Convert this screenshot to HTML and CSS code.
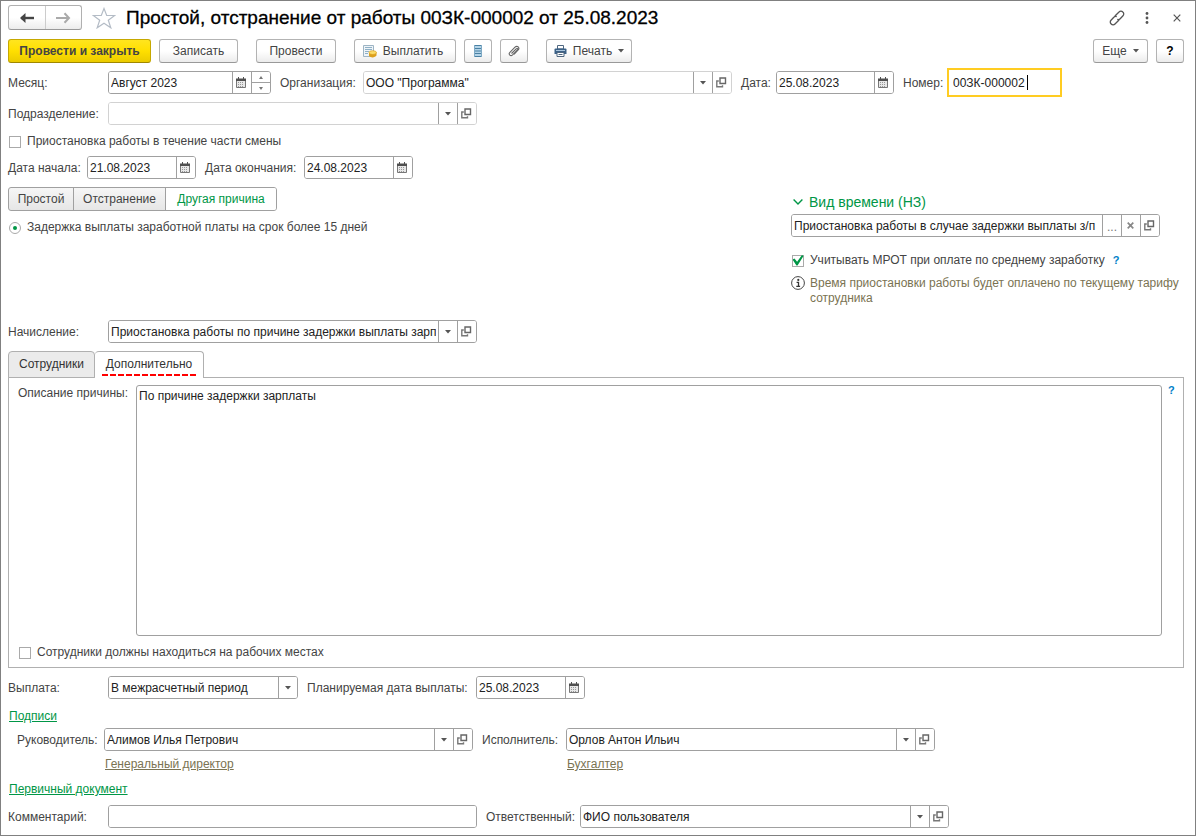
FILE: index.html
```html
<!DOCTYPE html>
<html lang="ru">
<head>
<meta charset="utf-8">
<title>Простой, отстранение от работы</title>
<link rel="stylesheet" href="styles.css">
</head>
<body>
<svg class="sprite" aria-hidden="true">
  <symbol id="calendar" viewBox="0 0 11 11">
    <path d="M.5 2.500h9v8h-9z" fill="#e8e8e8" stroke="#777"/>
    <path d="M0 1.500h10V4H0z" fill="#505050"/>
    <path d="M2.500 0v2M7.500 0v2" stroke="#505050"/>
    <path d="M2 5.500h6M2 7.500h6M2 9.500h6" stroke="#999" stroke-dasharray="1 1"/>
  </symbol>
  <symbol id="arrow" viewBox="0 0 6 4"><path d="M0 0h6L3 3.600z" fill="#555"/></symbol>
  <symbol id="open" viewBox="0 0 11 11">
    <path d="M4 1h5.500v5.500H4z" fill="none" stroke="#666" stroke-width="1.400"/>
    <path d="M2.800 4H.8v5.700h5.700V8.200" fill="none" stroke="#777" stroke-width="1.400"/>
  </symbol>
</svg>
<main class="window">
  <header class="titlebar">
    <div class="history">
      <button type="button" aria-label="Назад"><svg width="16" height="12" viewBox="0 0 16 12"><path d="M2 6h13" stroke="#444" stroke-width="2.400"/><path d="M1 6l5.500-5v10z" fill="#444"/></svg></button>
      <button type="button" aria-label="Вперед"><svg width="16" height="12" viewBox="0 0 16 12"><path d="M14 6H1" stroke="#aaa" stroke-width="2"/><path d="M9.500 1.200 14 6l-4.500 4.800" fill="none" stroke="#aaa" stroke-width="2"/></svg></button>
    </div>
    <button type="button" class="bare star" aria-label="В избранное"><svg width="24" height="22" viewBox="0 0 24 22"><path d="M12 1.500l2.700 7h8l-6.400 4.700 2.500 7.600L12 16.200l-6.800 4.600 2.500-7.600L1.300 8.500h8z" fill="none" stroke="#b4bcc6" stroke-width="1.200"/></svg></button>
    <h1>Простой, отстранение от работы 00ЗК-000002 от 25.08.2023</h1>
    <div class="window-tools">
      <button type="button" class="bare" aria-label="Ссылка"><svg width="16" height="16" viewBox="0 0 16 16"><g fill="none" stroke="#555" stroke-width="1.300" stroke-linecap="round"><path d="M6.200 5.800 10 2a2.600 2.600 0 0 1 3.800 0 2.600 2.600 0 0 1 .2 3.800L11.200 8.700a2.600 2.600 0 0 1-2.400.8"/><path d="M9.800 10.200 6 14a2.600 2.600 0 0 1-3.800 0A2.600 2.600 0 0 1 2 10.200L4.800 7.300a2.600 2.600 0 0 1 2.400-.8"/></g></svg></button>
      <button type="button" class="bare" aria-label="Меню"><svg width="4" height="12" viewBox="0 0 4 12"><g fill="#555"><circle cx="2" cy="1.500" r="1.400"/><circle cx="2" cy="6" r="1.400"/><circle cx="2" cy="10.500" r="1.400"/></g></svg></button>
      <button type="button" class="bare close" aria-label="Закрыть"><svg width="8" height="8" viewBox="0 0 8 8"><path d="M.7.700l6.600 6.600M7.300.700.700 7.300" stroke="#555" stroke-width="1.200"/></svg></button>
    </div>
  </header>

  <div class="toolbar">
    <button type="button" class="btn primary">Провести и закрыть</button>
    <button type="button" class="btn save">Записать</button>
    <button type="button" class="btn post">Провести</button>
    <button type="button" class="btn pay"><svg width="14" height="13" viewBox="0 0 14 13"><path d="M.5.500h10v11H.5z" fill="#eef4f8" stroke="#9db4c4"/><path d="M2 2.500h7M2 4.500h7M2 6.500h4M2 8.500h3" stroke="#8fb0c6"/><path d="M6 8v3c1.500 1.900 6 1.900 7.500-.4V7z" fill="#dca01c"/><ellipse cx="9.700" cy="7.600" rx="3.700" ry="1.900" fill="#fbdc6a" stroke="#dca01c" stroke-width=".7"/></svg>Выплатить</button>
    <button type="button" class="btn icon" aria-label="Реестр"><svg width="8" height="12" viewBox="0 0 8 12"><path d="M0 0h8v12H0z" fill="#b4d4e8"/><path d="M0 .5h8M0 3.500h8M0 6h8M0 8.500h8M0 11.500h8" stroke="#4a81a3"/><path d="M.5 0v12M7.500 0v12" stroke="#7faac5"/></svg></button>
    <button type="button" class="btn icon" aria-label="Файлы"><svg width="12" height="12" viewBox="0 0 12 12"><path d="M3.500 8.500 8.200 3.800c1-1 2.200.2 1.200 1.200L4.600 9.900c-2 1.900-4.600-.6-2.700-2.600L7 2.200C9.300 0 12.300 2.800 10 5.200L6 9.300" fill="none" stroke="#666" stroke-width="1.100"/></svg></button>
    <button type="button" class="btn print"><svg width="13" height="12" viewBox="0 0 13 12"><path d="M3.500.500h6V4h-6z" fill="#fff" stroke="#4f6780"/><path d="M.5 4.500q0-1 1-1h10q1 0 1 1v4.500H.5z" fill="#3d6287"/><path d="M2 5.500h9" stroke="#a9c4dc"/><path d="M3 7.500h7v4H3z" fill="#fff" stroke="#4f6780"/><path d="M4.500 9.500h4" stroke="#4f6780"/></svg>Печать<svg width="6" height="4"><use href="#arrow"/></svg></button>
    <button type="button" class="btn more">Еще<svg width="6" height="4"><use href="#arrow"/></svg></button>
    <button type="button" class="btn icon help-btn">?</button>
  </div>

  <form class="form">
    <div class="row">
      <label class="caption" for="month">Месяц:</label>
      <div class="field month">
        <input id="month" value="Август 2023">
        <button type="button" aria-label="Календарь"><svg width="11" height="11"><use href="#calendar"/></svg></button>
        <div class="spin">
          <button type="button" aria-label="Больше"><svg width="4" height="3" viewBox="0 0 4 3"><path d="M0 3l2-3 2 3z" fill="#777"/></svg></button>
          <button type="button" aria-label="Меньше"><svg width="4" height="3" viewBox="0 0 4 3"><path d="M0 0l2 3 2-3z" fill="#777"/></svg></button>
        </div>
      </div>
      <label class="organization-label" for="org">Организация:</label>
      <div class="field wide light">
        <input id="org" value="ООО &quot;Программа&quot;">
        <button type="button" aria-label="Выбрать"><svg width="6" height="4"><use href="#arrow"/></svg></button>
        <button type="button" aria-label="Открыть"><svg width="11" height="11"><use href="#open"/></svg></button>
      </div>
      <label class="doc-date-label" for="date">Дата:</label>
      <div class="field doc-date">
        <input id="date" value="25.08.2023">
        <button type="button" aria-label="Календарь"><svg width="11" height="11"><use href="#calendar"/></svg></button>
      </div>
      <label class="number-label" for="number">Номер:</label>
      <div class="number"><input id="number" value="00ЗК-000002"><span class="caret"></span></div>
    </div>

    <div class="row">
      <label class="caption" for="dept">Подразделение:</label>
      <div class="field wide light">
        <input id="dept" value="">
        <button type="button" aria-label="Выбрать"><svg width="6" height="4"><use href="#arrow"/></svg></button>
        <button type="button" aria-label="Открыть"><svg width="11" height="11"><use href="#open"/></svg></button>
      </div>
    </div>

    <label class="check part"><input type="checkbox">Приостановка работы в течение части смены</label>

    <div class="row dates">
      <label class="start-label" for="start">Дата начала:</label>
      <div class="field date">
        <input id="start" value="21.08.2023">
        <button type="button" aria-label="Календарь"><svg width="11" height="11"><use href="#calendar"/></svg></button>
      </div>
      <label class="end-label" for="end">Дата окончания:</label>
      <div class="field date">
        <input id="end" value="24.08.2023">
        <button type="button" aria-label="Календарь"><svg width="11" height="11"><use href="#calendar"/></svg></button>
      </div>
    </div>

    <div class="reason">
      <div class="reason-kind">
        <div class="switch">
          <label class="idle"><input type="radio" name="kind">Простой</label>
          <label class="removal"><input type="radio" name="kind">Отстранение</label>
          <label class="other"><input type="radio" name="kind" checked>Другая причина</label>
        </div>
        <label class="check delay"><input type="radio" name="delay" checked>Задержка выплаты заработной платы на срок более 15 дней</label>
      </div>
      <section class="time-kind">
        <h2><button type="button" class="bare"><svg width="10" height="6" viewBox="0 0 10 6"><path d="M.6.600 5 5 9.400.600" fill="none" stroke="#009646" stroke-width="1.400"/></svg>Вид времени (НЗ)</button></h2>
        <div class="field wide">
          <input aria-label="Вид времени" value="Приостановка работы в случае задержки выплаты з/п">
          <button type="button" class="dots">...</button>
          <button type="button" aria-label="Очистить"><svg width="7" height="7" viewBox="0 0 7 7"><path d="M.7.700l5.600 5.600M6.300.700.700 6.300" stroke="#888" stroke-width="1.700"/></svg></button>
          <button type="button" aria-label="Открыть"><svg width="11" height="11"><use href="#open"/></svg></button>
        </div>
        <div class="wage"><label class="check"><input type="checkbox" checked>Учитывать МРОТ при оплате по среднему заработку</label><button type="button" class="bare hint">?</button></div>
        <p class="note"><svg width="14" height="14" viewBox="0 0 14 14"><circle cx="7" cy="7" r="6.400" fill="#fff" stroke="#444"/><circle cx="7.300" cy="3.900" r="1.100" fill="#333"/><path d="M5.600 6.300h1.900v3.900M5.300 10.300h3.800" fill="none" stroke="#333" stroke-width="1.300"/></svg>Время приостановки работы будет оплачено по текущему тарифу сотрудника</p>
      </section>
    </div>

    <div class="row accrual">
      <label class="caption" for="accrual">Начисление:</label>
      <div class="field wide">
        <input id="accrual" value="Приостановка работы по причине задержки выплаты зарплаты">
        <button type="button" aria-label="Выбрать"><svg width="6" height="4"><use href="#arrow"/></svg></button>
        <button type="button" aria-label="Открыть"><svg width="11" height="11"><use href="#open"/></svg></button>
      </div>
    </div>

    <div class="tabs" role="tablist">
      <button type="button" role="tab" class="tab staff">Сотрудники</button>
      <button type="button" role="tab" class="tab extra" aria-selected="true">Дополнительно</button>
    </div>
    <section class="panel">
      <div class="description">
        <label for="description">Описание причины:</label>
        <textarea id="description">По причине задержки зарплаты</textarea>
        <button type="button" class="bare hint">?</button>
      </div>
      <label class="check"><input type="checkbox">Сотрудники должны находиться на рабочих местах</label>
    </section>

    <div class="row">
      <label class="caption" for="payment">Выплата:</label>
      <div class="field payment">
        <select id="payment"><option>В межрасчетный период</option></select>
        <span class="select-arrow"><svg width="6" height="4"><use href="#arrow"/></svg></span>
      </div>
      <label class="planned-label" for="planned">Планируемая дата выплаты:</label>
      <div class="field date">
        <input id="planned" value="25.08.2023">
        <button type="button" aria-label="Календарь"><svg width="11" height="11"><use href="#calendar"/></svg></button>
      </div>
    </div>

    <a class="group-link" href="#signatures">Подписи</a>
    <div class="signatures" id="signatures">
      <label class="head-label" for="head">Руководитель:</label>
      <div class="signer">
        <div class="field wide">
          <input id="head" value="Алимов Илья Петрович">
          <button type="button" aria-label="Выбрать"><svg width="6" height="4"><use href="#arrow"/></svg></button>
          <button type="button" aria-label="Открыть"><svg width="11" height="11"><use href="#open"/></svg></button>
        </div>
        <a href="#head">Генеральный директор</a>
      </div>
      <label class="executor-label" for="executor">Исполнитель:</label>
      <div class="signer">
        <div class="field wide">
          <input id="executor" value="Орлов Антон Ильич">
          <button type="button" aria-label="Выбрать"><svg width="6" height="4"><use href="#arrow"/></svg></button>
          <button type="button" aria-label="Открыть"><svg width="11" height="11"><use href="#open"/></svg></button>
        </div>
        <a href="#executor">Бухгалтер</a>
      </div>
    </div>
    <a class="group-link" href="#comment">Первичный документ</a>

    <div class="row">
      <label class="caption" for="comment">Комментарий:</label>
      <div class="field wide"><input id="comment" value=""></div>
      <label class="responsible-label" for="responsible">Ответственный:</label>
      <div class="field wide">
        <input id="responsible" value="ФИО пользователя">
        <button type="button" aria-label="Выбрать"><svg width="6" height="4"><use href="#arrow"/></svg></button>
        <button type="button" aria-label="Открыть"><svg width="11" height="11"><use href="#open"/></svg></button>
      </div>
    </div>
  </form>
</main>
</body>
</html>
```
FILE: styles.css
```css
* { box-sizing: border-box; }

body {
  margin: 0;
  background: #fff;
}

body, button, input, select, textarea {
  font-family: "Liberation Sans", Arial, sans-serif;
  font-size: 12px;
  line-height: 15px;
  color: #444;
}

svg { flex: none; }
.sprite { display: none; }

.window {
  display: flex;
  flex-direction: column;
  min-height: 100vh;
  padding: 4px 11px 7px 7px;
  border: 1px solid #808080;
}

.bare {
  display: flex;
  align-items: center;
  padding: 0;
  border: 0;
  background: none;
}

/* Title bar */
.titlebar {
  display: flex;
  align-items: center;
  height: 25px;
}

.history {
  display: flex;
  width: 74px;
  height: 25px;
  border: 1px solid #b0b0b0;
  border-bottom-color: #999;
  border-radius: 3px;
  background: linear-gradient(#fff 50%, #ececec);
}

.history button {
  display: flex;
  flex: 1;
  align-items: center;
  justify-content: center;
  padding: 0;
  border: 0;
  background: none;
}

.history button + button { border-left: 1px solid #ccc; }
.star { margin: 0 10px; }

h1 {
  flex: 1;
  margin: 0;
  font-size: 19px;
  line-height: 24px;
  font-weight: 400;
  color: #000;
  white-space: nowrap;
  -webkit-text-stroke: 0.3px #000;
}

.window-tools {
  display: flex;
  align-items: center;
  gap: 20px;
  padding-right: 3px;
}

.close { margin-left: 4px; }

/* Command bar */
.toolbar {
  display: flex;
  gap: 8px;
  margin-top: 9px;
}

.btn {
  display: flex;
  align-items: center;
  justify-content: center;
  gap: 6px;
  height: 24px;
  padding: 0;
  border: 1px solid #b3b3b3;
  border-bottom-color: #999;
  border-radius: 3px;
  background: linear-gradient(#fff 50%, #ececec);
}

.primary {
  width: 143px;
  border-color: #c6a800;
  border-bottom-color: #a08800;
  background: linear-gradient(#ffe51f, #ffdf00 50%, #ebcb00);
  font-weight: 700;
}

.save { width: 79px; }
.post { width: 80px; margin: 0 10px; }
.pay { width: 102px; padding-right: 4px; }
.icon { width: 28px; }
.print { width: 86px; margin-left: 10px; }
.more { width: 55px; margin-left: auto; }
.help-btn { font-weight: 700; color: #000; }

/* Form rows */
.form {
  display: flex;
  flex: 1;
  flex-direction: column;
  margin-top: 8px;
}

.row {
  display: flex;
  align-items: center;
  gap: 8px;
  height: 23px;
  margin-bottom: 8px;
}

.row label {
  padding-top: 1px;
  white-space: nowrap;
}

.caption { width: 92px; }

.field {
  display: flex;
  height: 23px;
  border: 1px solid #a0a0a0;
  border-radius: 3px;
  overflow: hidden;
}

.light { border-color: #d2d2d2; }
.wide { width: 369px; }

.field input, .field select {
  flex: 1;
  min-width: 0;
  padding: 2px 2px 0;
  border: 0;
  background: #fff;
  color: #222;
  outline: 0;
  appearance: none;
}

.field > button, .select-arrow {
  display: flex;
  flex: none;
  align-items: center;
  justify-content: center;
  width: 19px;
  padding: 0 1px 0 0;
  border: 0;
  border-left: 1px solid #a0a0a0;
  background: #fff;
}

.field .dots { padding: 4px 0 0; color: #777; }

.spin {
  display: flex;
  flex-direction: column;
  width: 19px;
  border-left: 1px solid #a0a0a0;
}

.spin button {
  display: flex;
  flex: 1;
  align-items: center;
  justify-content: center;
  padding: 0;
  border: 0;
  background: #fff;
}

.spin button + button { border-top: 1px solid #a0a0a0; }
.month { width: 163px; }
.doc-date { width: 118px; }
.date { width: 109px; }
.payment { width: 190px; }

.organization-label { width: 75px; margin-left: 1px; }
.doc-date-label { width: 27px; margin-left: 1px; }
.number-label { width: 36px; margin-left: 1px; }
.start-label { width: 71px; }
.end-label { width: 91px; margin-left: 1px; }
.planned-label { width: 161px; margin-left: 1px; }
.responsible-label { width: 86px; margin-left: 1px; }

.number {
  position: relative;
  width: 115px;
  height: 29px;
  border: 2px solid #fc2;
}

.number input {
  width: 100%;
  height: 100%;
  padding: 0 4px;
  border: 0;
  outline: 0;
  color: #222;
}

.caret {
  position: absolute;
  top: 5px;
  left: 78px;
  width: 1px;
  height: 15px;
  background: #000;
}

.check {
  display: flex;
  align-items: center;
  gap: 6px;
  height: 15px;
}

.check input {
  display: grid;
  place-content: center;
  width: 12px;
  height: 12px;
  margin: 0 0 0 1px;
  border: 1px solid #aaa;
  background: #fff;
  appearance: none;
}

.check input[type="radio"] { border-radius: 50%; }

.check input[type="radio"]:checked::before {
  content: "";
  width: 4px;
  height: 4px;
  border-radius: 50%;
  background: #009646;
}

.check input[type="checkbox"]:checked::before {
  content: "";
  width: 11px;
  height: 11px;
  background: #009646;
  clip-path: polygon(0 40%, 18% 32%, 42% 62%, 86% 0, 100% 8%, 46% 96%, 36% 96%);
}

.part { margin-top: 1px; }
.dates { margin: 7px 0 8px; }

/* Reason and time kind */
.reason {
  display: flex;
  justify-content: space-between;
}

.switch {
  display: flex;
  width: 269px;
  height: 24px;
  border: 1px solid #a0a0a0;
  border-radius: 3px;
  background: linear-gradient(#f6f6f6, #e6e6e6);
  overflow: hidden;
}

.switch label {
  display: flex;
  align-items: center;
  justify-content: center;
}

.switch input {
  position: absolute;
  opacity: 0;
}

.idle { width: 64px; }
.removal { width: 92px; border-left: 1px solid #a0a0a0; }
.other { flex: 1; border-left: 1px solid #a0a0a0; background: #fff; color: #009646; }
.delay { margin-top: 9px; }

.time-kind {
  width: 393px;
  padding-top: 6px;
}

h2 { margin: 0 0 3px; }

h2 .bare {
  gap: 6px;
  padding-left: 2px;
  font-size: 14px;
  line-height: 18px;
  color: #009646;
}

.wage {
  display: flex;
  gap: 8px;
  margin-top: 16px;
}

.hint {
  font-size: 11px;
  font-weight: 700;
  color: #0080c8;
}

.note {
  display: flex;
  align-items: flex-start;
  gap: 5px;
  margin: 8px 0 0;
  color: #7a7352;
}

.accrual { margin-top: 14px; }

/* Tabs */
.tabs {
  z-index: 1;
  display: flex;
  height: 27px;
  margin-bottom: -1px;
}

.tab {
  padding: 0;
  border: 1px solid #b0b0b0;
  border-radius: 4px 4px 0 0;
  background: #ebebeb;
  color: #333;
}

.staff { width: 87px; }

.extra {
  display: flex;
  flex-direction: column;
  align-items: center;
  justify-content: flex-end;
  gap: 2px;
  width: 109px;
  padding-bottom: 2px;
  border-left: 0;
  border-bottom: 0;
  background: #fff;
}

.extra::after {
  content: "";
  width: 94px;
  height: 2px;
  background: repeating-linear-gradient(90deg, #f00 0 6px, transparent 6px 8px);
}

.panel {
  display: flex;
  flex: 1;
  flex-direction: column;
  gap: 9px;
  margin-bottom: 8px;
  padding: 7px 9px;
  border: 1px solid #b0b0b0;
}

.description {
  display: flex;
  flex: 1;
  align-items: stretch;
}

.description label {
  width: 118px;
  padding-top: 1px;
  white-space: nowrap;
}

.description textarea {
  flex: 1;
  min-width: 0;
  padding: 3px 2px;
  border: 1px solid #a0a0a0;
  border-radius: 3px;
  outline: 0;
  resize: none;
  color: #222;
}

.description .hint {
  align-self: flex-start;
  width: 12px;
  height: 10px;
  padding-left: 6px;
}

/* Signatures */
.group-link {
  align-self: flex-start;
  margin: 2px 0 4px 1px;
  color: #009646;
}

.signatures {
  display: flex;
  align-items: flex-start;
  padding-left: 9px;
}

.signatures label {
  line-height: 24px;
  white-space: nowrap;
}

.head-label { width: 87px; }
.executor-label { width: 84px; margin-left: 9px; }

.signer {
  display: flex;
  flex-direction: column;
  gap: 6px;
}

.signer a {
  align-self: flex-start;
  margin: 0 0 8px 1px;
  color: #7a7352;
}

.form > .row:last-child { margin: 4px 0 0; }
```
